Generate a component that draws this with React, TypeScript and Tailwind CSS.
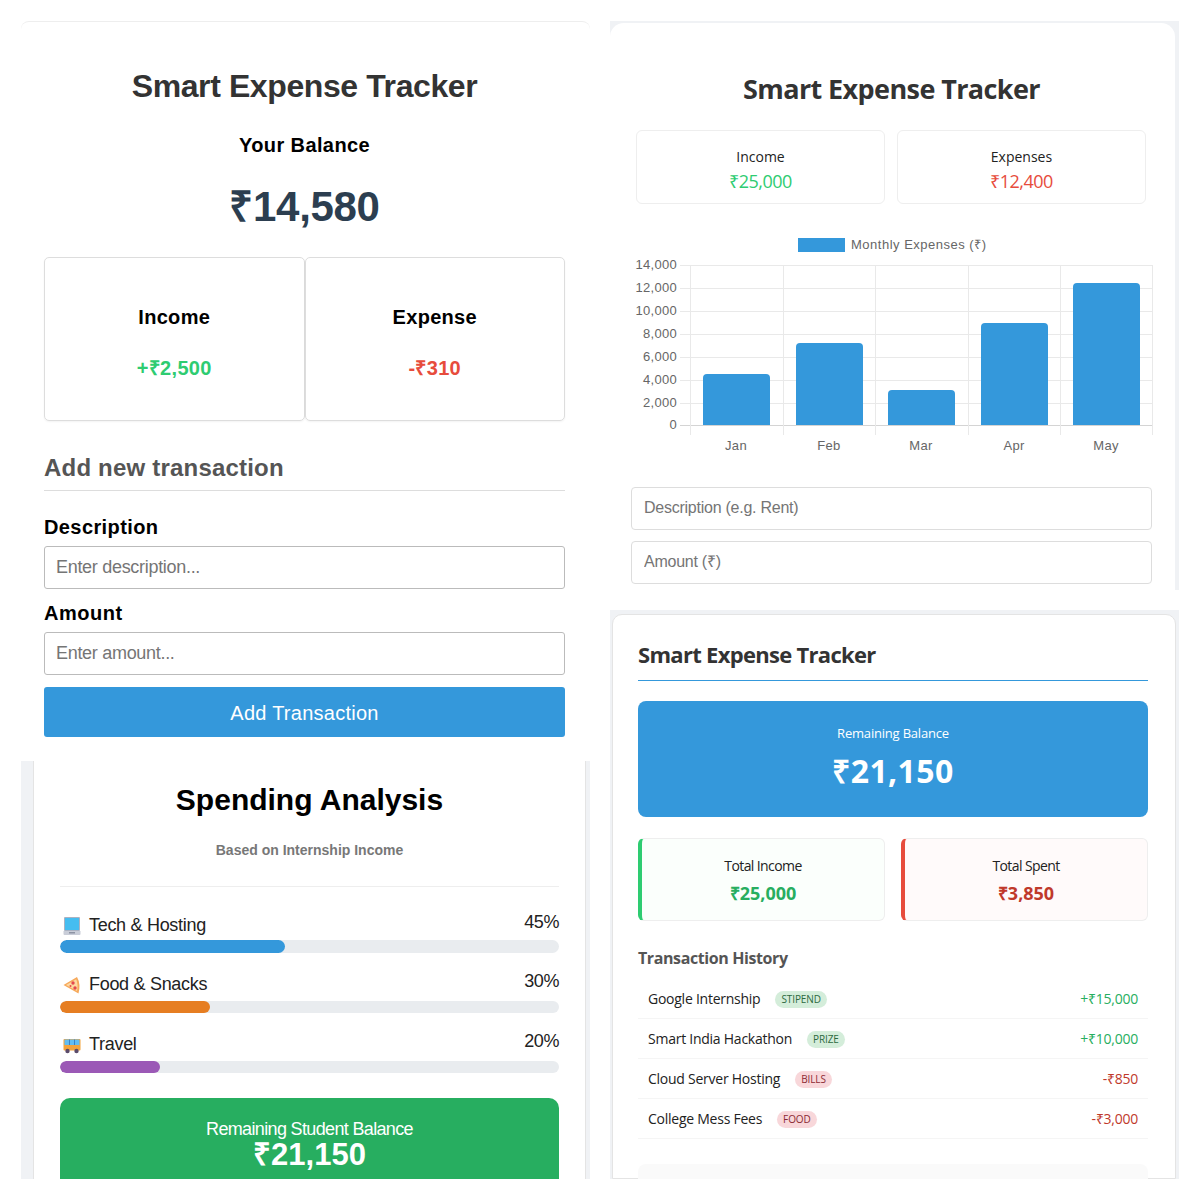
const sans = "font-['Liberation_Sans',Arial,sans-serif]";

function LaptopIcon() {
  return (
    <svg width="18" height="18" viewBox="0 0 18 18" className="ml-[3px] shrink-0">
      <rect x="1" y="0" width="16" height="14" rx="1" fill="#aab2c2" />
      <rect x="2" y="1" width="14" height="12" fill="#45bdf0" />
      <path d="M0.5 14 H17.5 V17 Q17.5 18 16.5 18 H1.5 Q0.5 18 0.5 17 Z" fill="#c9cdd8" />
      <rect x="6" y="15" width="6" height="1.5" fill="#8d93a3" />
    </svg>
  );
}

function PizzaIcon() {
  return (
    <svg width="18" height="18" viewBox="0 0 18 18" className="ml-[3px] shrink-0">
      <path d="M0.5 9 L14 1 Q18 8 15.5 17.5 Z" fill="#f6a85a" />
      <path d="M3 9 L13.2 3.2 Q15.5 9 14 15 Z" fill="#fdd9a0" />
      <circle cx="10" cy="7" r="1.7" fill="#e5484d" />
      <circle cx="12" cy="12" r="1.7" fill="#e5484d" />
      <circle cx="7.5" cy="10" r="1" fill="#e5484d" />
    </svg>
  );
}

function BusIcon() {
  return (
    <svg width="18" height="18" viewBox="0 0 18 18" className="ml-[3px] shrink-0">
      <rect x="0.5" y="3" width="17" height="11.5" rx="1" fill="#f4a33b" />
      <rect x="1.5" y="3.5" width="15" height="5.5" fill="#62bdf2" />
      <rect x="6" y="3.5" width="1" height="5.5" fill="#3c82c4" />
      <rect x="11" y="3.5" width="1" height="5.5" fill="#3c82c4" />
      <circle cx="4.5" cy="15" r="2.2" fill="#5a4a6a" />
      <circle cx="13.5" cy="15" r="2.2" fill="#5a4a6a" />
    </svg>
  );
}

function BalancePanel() {
  return (
    <div className={`${sans} h-[740px] rounded-t-lg border-t border-[#eeeeee] bg-white pt-[46px] pr-[25px] pl-[23px]`}>
      <h1 className="text-center text-[32px] leading-[37px] font-bold tracking-[-0.4px] text-[#333333]">Smart Expense Tracker</h1>
      <h2 className="mt-[29px] text-center text-[20px] leading-[23px] font-bold tracking-[0.4px] text-black">Your Balance</h2>
      <div className="mt-[26px] text-center text-[42px] leading-[48px] font-bold tracking-[-0.3px] text-[#2c3e50]">₹14,580</div>
      <div className="mt-[26px] flex h-[164px]">
        <div className="flex flex-1 flex-col items-center rounded-[5px] border border-[#dddddd] pt-[48px] shadow-[0_1px_2px_rgba(0,0,0,0.05)]">
          <div className="text-[20px] leading-[23px] font-bold tracking-[0.3px] text-black">Income</div>
          <div className="mt-[28px] text-[20px] leading-[23px] font-bold tracking-[0.3px] text-[#2ecc71]">+₹2,500</div>
        </div>
        <div className="flex flex-1 flex-col items-center rounded-[5px] border border-[#dddddd] pt-[48px] shadow-[0_1px_2px_rgba(0,0,0,0.05)]">
          <div className="text-[20px] leading-[23px] font-bold tracking-[0.3px] text-black">Expense</div>
          <div className="mt-[28px] text-[20px] leading-[23px] font-bold tracking-[0.3px] text-[#e74c3c]">-₹310</div>
        </div>
      </div>
      <h3 className="mt-[33px] border-b border-[#dddddd] pb-[8px] text-[24px] leading-[28px] font-bold tracking-[0.2px] text-[#555555]">Add new transaction</h3>
      <label className="mt-[25px] block text-[20px] leading-[23px] font-bold tracking-[0.4px] text-black">Description</label>
      <input placeholder="Enter description..." className="mt-[7px] block h-[43px] w-full rounded-[3px] border border-[#bbbbbb] px-[11px] text-[18px] tracking-[-0.3px] placeholder:text-[#757575]" />
      <label className="mt-[13px] block text-[20px] leading-[23px] font-bold tracking-[0.5px] text-black">Amount</label>
      <input placeholder="Enter amount..." className="mt-[7px] block h-[43px] w-full rounded-[3px] border border-[#bbbbbb] px-[11px] text-[18px] tracking-[-0.3px] placeholder:text-[#757575]" />
      <button className="mt-[12px] h-[50px] w-full rounded-[3px] bg-[#3498db] pt-[1px] text-[20px] tracking-[0.25px] text-white">Add Transaction</button>
    </div>
  );
}

const categories = [
  { name: "Tech & Hosting", pct: 45, icon: <LaptopIcon />, bar: "bg-[#3498db]", mt: "mt-[27px]", h: "h-[13px]", row: "h-[26px]", pb: "pb-[4px]" },
  { name: "Food & Snacks", pct: 30, icon: <PizzaIcon />, bar: "bg-[#e67e22]", mt: "mt-[20px]", h: "h-[12px]", row: "h-[28px]", pb: "pb-[6px]" },
  { name: "Travel", pct: 20, icon: <BusIcon />, bar: "bg-[#9b59b6]", mt: "mt-[20px]", h: "h-[12px]", row: "h-[28px]", pb: "pb-[6px]" },
];

function SpendingPanel() {
  return (
    <div className={`${sans} h-[418px] overflow-hidden bg-[#f0f2f5] pr-[4px] pl-[12px]`}>
      <div className="h-full border-x border-[#e4e4e4] bg-white pt-[20px] pr-[26px] pl-[26px]">
        <h2 className="text-center text-[30px] leading-[37px] font-bold text-black">Spending Analysis</h2>
        <p className="mt-[24px] text-center text-[14px] leading-[16px] font-bold text-[#777777]">Based on Internship Income</p>
        <div className="mt-[28px] border-t border-[#eeeeee]" />
        {categories.map((c) => (
          <div key={c.name} className={c.mt}>
            <div className={`flex justify-between text-[18px] leading-[21px] text-[#222222] ${c.row}`}>
              <span className={`flex items-center gap-[8px] self-end tracking-[-0.3px] ${c.pb}`}>{c.icon}{c.name}</span>
              <span className="-mt-[2px] tracking-[-0.4px]">{c.pct}%</span>
            </div>
            <div className={`${c.h} overflow-hidden rounded-full bg-[#e9ecef]`}>
              <div className={`h-full rounded-full ${c.bar}`} style={{ width: `${c.pct}%` }} />
            </div>
          </div>
        ))}
        <div className="mt-[25px] h-[120px] rounded-[10px] bg-[#27ae60] pt-[21px] text-center text-white">
          <div className="text-[18px] leading-[21px] tracking-[-0.65px]">Remaining Student Balance</div>
          <div className="-mt-[3px] text-[31px] leading-[36px] font-bold">₹21,150</div>
        </div>
      </div>
    </div>
  );
}

const chartData = [
  { m: "Jan", top: 374, x: 703 },
  { m: "Feb", top: 343, x: 796 },
  { m: "Mar", top: 390, x: 888 },
  { m: "Apr", top: 323, x: 981 },
  { m: "May", top: 283, x: 1073 },
];
const yTicks = [
  { v: "14,000", y: 265 },
  { v: "12,000", y: 288 },
  { v: "10,000", y: 311 },
  { v: "8,000", y: 334 },
  { v: "6,000", y: 357 },
  { v: "4,000", y: 380 },
  { v: "2,000", y: 403 },
  { v: "0", y: 425 },
];
const xGrid = [690, 783, 875, 968, 1060, 1152];

// viewBox uses the page coordinates of the chart area
function BarChart() {
  return (
    <svg width="540" height="224" viewBox="620 232 540 224" className="block">
      <rect x="798" y="238" width="47" height="14" fill="#3498db" />
      <text x="851" y="249" fontSize="13" letterSpacing="0.5" fill="#666666" fontFamily="Liberation Sans">Monthly Expenses (₹)</text>
      {yTicks.map((t) => (
        <g key={t.v}>
          <line x1="680" x2="1152" y1={t.y + 0.5} y2={t.y + 0.5} stroke={t.v === "0" ? "#d4d4d4" : "#e9e9e9"} />
          <text x="677" y={t.y + 4} textAnchor="end" fontSize="13" letterSpacing="0.3" fill="#666666" fontFamily="Liberation Sans">{t.v}</text>
        </g>
      ))}
      {xGrid.map((x) => (
        <line key={x} x1={x + 0.5} x2={x + 0.5} y1="265" y2="435" stroke="#e9e9e9" />
      ))}
      {chartData.map((d) => (
        <g key={d.m}>
          <path d={`M${d.x} 425 V${d.top + 4} Q${d.x} ${d.top} ${d.x + 4} ${d.top} H${d.x + 63} Q${d.x + 67} ${d.top} ${d.x + 67} ${d.top + 4} V425 Z`} fill="#3498db" />
          <text x={d.x + 33} y="450" textAnchor="middle" fontSize="13" letterSpacing="0.3" fill="#666666" fontFamily="Liberation Sans">{d.m}</text>
        </g>
      ))}
    </svg>
  );
}

function ChartPanel() {
  return (
    <div className="h-[569px] overflow-hidden bg-[#f0f2f5] pt-[2px] pr-[4px] font-['Open_Sans',sans-serif]">
      <div className="h-full rounded-t-[14px] bg-white pt-[50px]">
        <h2 className="pr-[2px] text-center text-[27px] leading-[32px] font-bold tracking-[-0.6px] text-[#333333]">Smart Expense Tracker</h2>
        <div className="mt-[25px] mr-[29px] ml-[26px] flex gap-[12px]">
          <div className="h-[74px] flex-1 rounded-[6px] border border-[#eeeeee] pt-[16px] text-center">
            <div className="text-[14px] leading-[20px] text-[#222222]">Income</div>
            <div className="mt-[2px] text-[18px] leading-[24px] tracking-[-0.5px] text-[#2ecc71]">₹25,000</div>
          </div>
          <div className="h-[74px] flex-1 rounded-[6px] border border-[#eeeeee] pt-[16px] text-center">
            <div className="text-[14px] leading-[20px] text-[#222222]">Expenses</div>
            <div className="mt-[2px] text-[18px] leading-[24px] tracking-[-0.5px] text-[#e74c3c]">₹12,400</div>
          </div>
        </div>
        <div className="mt-[28px] ml-[10px]">
          <BarChart />
        </div>
        <input placeholder="Description (e.g. Rent)" className="mt-[31px] ml-[21px] block h-[43px] w-[521px] rounded-[4px] border border-[#dddddd] px-[12px] pb-[2px] font-['Liberation_Sans',sans-serif] text-[16px] tracking-[-0.25px] placeholder:text-[#757575]" />
        <input placeholder="Amount (₹)" className="mt-[11px] ml-[21px] block h-[43px] w-[521px] rounded-[4px] border border-[#dddddd] px-[12px] pb-[2px] font-['Liberation_Sans',sans-serif] text-[16px] tracking-[-0.25px] placeholder:text-[#757575]" />
      </div>
    </div>
  );
}

const txns = [
  { name: "Google Internship", tag: "STIPEND", amt: "+₹15,000", income: true },
  { name: "Smart India Hackathon", tag: "PRIZE", amt: "+₹10,000", income: true },
  { name: "Cloud Server Hosting", tag: "BILLS", amt: "-₹850", income: false },
  { name: "College Mess Fees", tag: "FOOD", amt: "-₹3,000", income: false },
];

function HistoryPanel() {
  return (
    <div className="h-[569px] overflow-hidden bg-[#f0f2f5] pt-[4px] pr-[3px] pl-[2px] font-['Open_Sans',sans-serif]">
      <div className="h-full rounded-t-[10px] border border-[#e4e4e4] bg-white pt-[23px] pr-[27px] pl-[25px]">
        <h2 className="border-b border-[#3498db] pb-[10px] text-[22px] leading-[32px] font-bold tracking-[-0.7px] text-[#333333]">Smart Expense Tracker</h2>
        <div className="mt-[20px] flex h-[116px] flex-col items-center rounded-[8px] bg-[#3498db] pt-[22px] text-white">
          <div className="text-[13px] leading-[20px] tracking-[-0.2px]">Remaining Balance</div>
          <div className="mt-[8px] text-[32px] leading-[40px] font-bold tracking-[0.4px]">₹21,150</div>
        </div>
        <div className="mt-[21px] flex gap-[16px]">
          <div className="h-[83px] flex-1 rounded-[6px] border border-[#eeeeee] border-l-[4px] border-l-[#2ecc71] bg-[#fbfffc] pt-[17px] text-center">
            <div className="text-[14px] leading-[20px] tracking-[-0.6px] text-[#222222]">Total Income</div>
            <div className="mt-[5px] text-[18px] leading-[24px] font-bold text-[#27ae60]">₹25,000</div>
          </div>
          <div className="h-[83px] flex-1 rounded-[6px] border border-[#eeeeee] border-l-[4px] border-l-[#e74c3c] bg-[#fffafa] pt-[17px] text-center">
            <div className="text-[14px] leading-[20px] tracking-[-0.6px] text-[#222222]">Total Spent</div>
            <div className="mt-[5px] text-[18px] leading-[24px] font-bold text-[#c0392b]">₹3,850</div>
          </div>
        </div>
        <h3 className="mt-[26px] text-[16px] leading-[22px] font-bold tracking-[-0.4px] text-[#555555]">Transaction History</h3>
        <div className="mt-[10px]">
          {txns.map((t) => (
            <div key={t.name} className="flex h-[40px] items-center justify-between border-b border-[#f5f5f5] px-[10px]">
              <div className="flex items-center gap-[15px]">
                <span className="text-[14px] tracking-[-0.25px] text-[#222222]">{t.name}</span>
                <span className={`mt-[1px] rounded-full px-[6px] text-[10px] leading-[17px] tracking-[-0.1px] ${t.income ? "bg-[#d4edda] text-[#2d6a3e]" : "bg-[#f8d7da] text-[#8b2a33]"}`}>{t.tag}</span>
              </div>
              <span className={`text-[14px] tracking-[-0.25px] ${t.income ? "text-[#27ae60]" : "text-[#c0392b]"}`}>{t.amt}</span>
            </div>
          ))}
        </div>
        <div className="mt-[25px] h-[40px] rounded-t-[8px] bg-[#fafafa]" />
      </div>
    </div>
  );
}

export default function App() {
  return (
    <div className="h-[1200px] bg-white p-[21px]">
      <div className="flex gap-[20px]">
        <div className="flex w-[569px] flex-col">
          <BalancePanel />
          <SpendingPanel />
        </div>
        <div className="flex w-[569px] flex-col gap-[20px]">
          <ChartPanel />
          <HistoryPanel />
        </div>
      </div>
    </div>
  );
}
